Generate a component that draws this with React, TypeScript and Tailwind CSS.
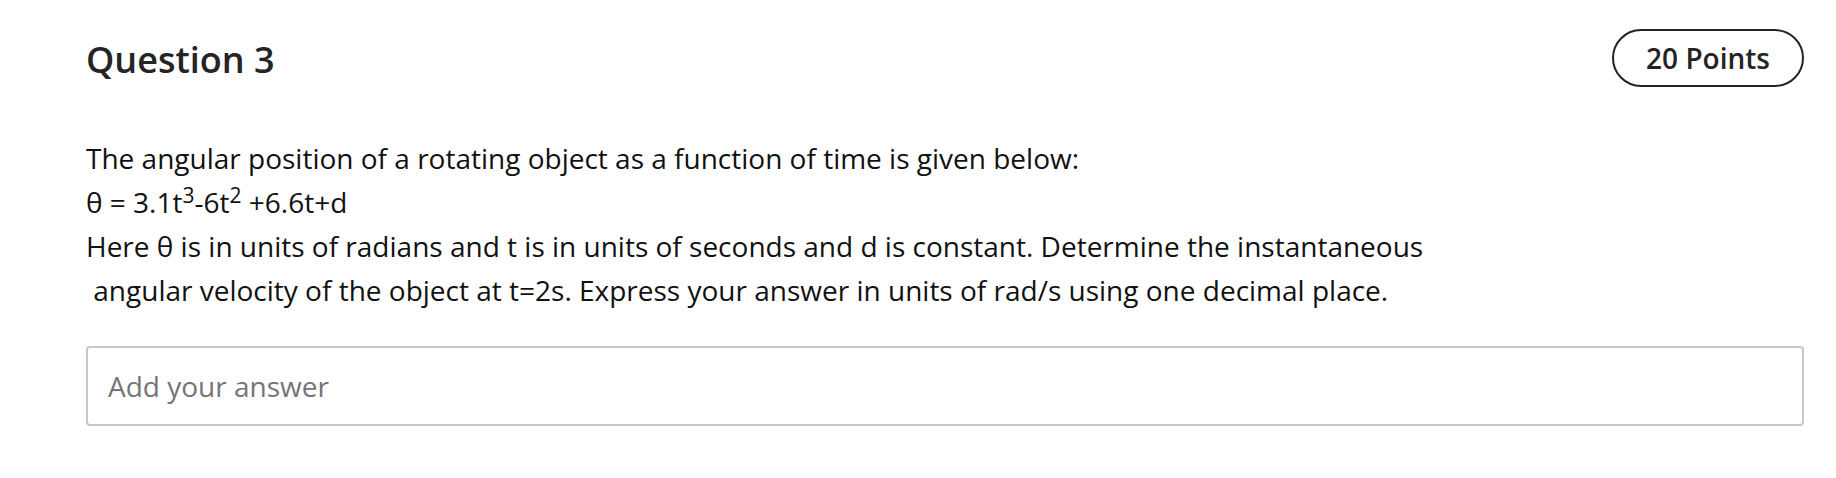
import React from "react";

const font = { fontFamily: '"Open Sans", "Noto Sans", sans-serif' };

const App = () => {
  return (
    <div className="min-h-screen bg-white pl-[86px] pr-[32px] pt-[29px]" style={font}>
      <div className="flex items-start justify-between">
        <h2 className="mt-[7px] text-[36px] leading-[48px] font-semibold text-[#242424]">Question 3</h2>
        <div className="flex h-[58px] items-center rounded-full border-2 border-[#242424] px-[32px] text-[28px] font-semibold text-[#242424]">
          20 Points
        </div>
      </div>
      <p className="mt-[49px] text-[28px] leading-[44px] text-[#111]">
        The angular position of a rotating object as a function of time is given below:
        <br />
        θ = 3.1t<sup>3</sup>-6t<sup>2</sup> +6.6t+d
        <br />
        Here θ is in units of radians and t is in units of seconds and d is constant. Determine the instantaneous
        <br />
        {"\u00a0"}angular velocity of the object at t=2s. Express your answer in units of rad/s using one decimal place.
      </p>
      <div className="mt-[34px] flex h-[80px] items-center rounded-[4px] border-2 border-[#c8c8c8] px-[20px]">
        <span className="text-[28px] text-[#757575]">Add your answer</span>
      </div>
    </div>
  );
};

export default App;
